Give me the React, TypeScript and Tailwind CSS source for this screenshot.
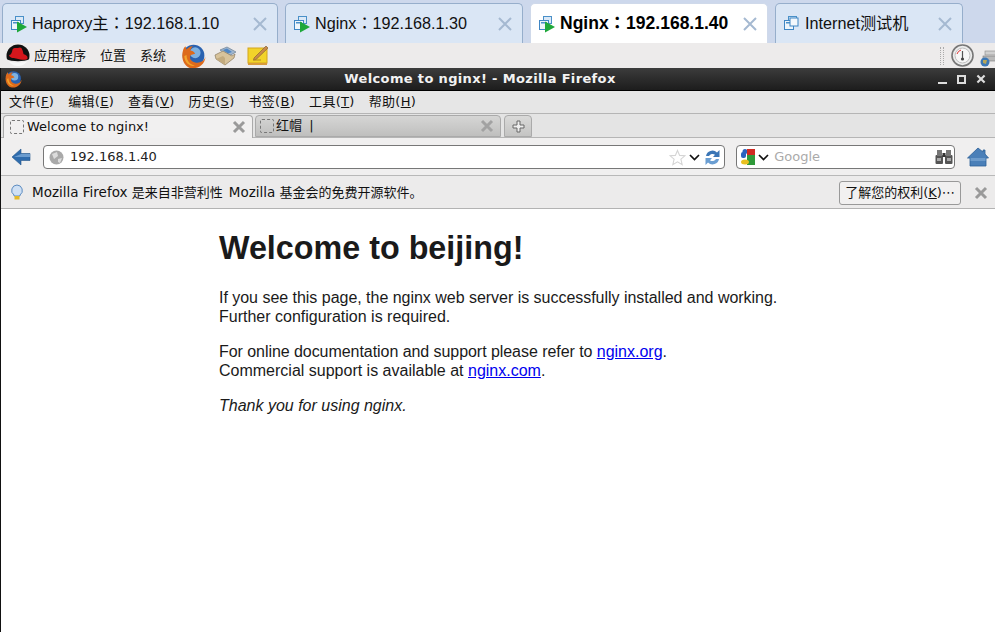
import React from "react";

const UI = "font-['DejaVu_Sans','Noto_Sans_CJK_SC',sans-serif]";

function VmIcon({ play }: { play?: boolean }) {
  return (
    <svg width="18" height="18" viewBox="0 0 18 18" className="shrink-0">
      <rect x="5.5" y="1.5" width="8" height="7" fill="#dbe9f7" stroke="#4a90c8" />
      <rect x="1.5" y="5.5" width="9" height="9" fill="#eef5fb" stroke="#3f86c4" />
      <rect x="3" y="7" width="6" height="1.5" fill="#4a90c8" />
      {play ? <path d="M7 6.5 L17 12 L7 17.5 Z" fill="#1ea83a" /> : <rect x="7" y="3" width="8" height="8" fill="#f4f8fc" stroke="#3f86c4" />}
    </svg>
  );
}

function TabX() {
  return (
    <svg width="16" height="16" viewBox="0 0 16 16" className="shrink-0">
      <path d="M2 2 L14 14 M14 2 L2 14" stroke="#a5b9d1" strokeWidth="2" />
    </svg>
  );
}

function VmTab({ label, play, active, w, mr }: { label: string; play?: boolean; active?: boolean; w: string; mr: string }) {
  return (
    <div className={`${w} ${mr} pr-[9px] h-[40px] rounded-t-[5px] border border-b-0 flex items-center pl-[7px] shrink-0 ${active ? "bg-white border-[#cfd9ea]" : "bg-[#dae6f5] border-[#96aecb]"}`}>
      <VmIcon play={play} />
      <span className={`font-['Liberation_Sans','Noto_Sans_CJK_TC',sans-serif] whitespace-nowrap ml-[4px] flex-1 ${active ? "font-bold text-[17.5px] text-black" : "text-[16.2px] text-[#111]"}`}>{label}</span>
      <TabX />
    </div>
  );
}

function Hat() {
  return (
    <svg width="24" height="24" viewBox="0 0 24 24" className="shrink-0">
      <circle cx="12" cy="12" r="11.5" fill="#111" />
      <path d="M0 15 C6 18 18 18 24 15 V24 H0 Z" fill="#edebeb" />
      <path d="M2.5 17 C7 19 17 19 21.5 17 A11.5 11.5 0 0 1 2.5 17 Z" fill="#f8f8f8" />
      <path d="M3 11 C5 11 6 9 6.5 5.5 C8 3 11 4.5 14 3.5 C16 3.5 17 7 17.5 10 C20 11 22 12 21.5 14.5 C20 17 15 15.5 10 14.5 C7 14 3.5 14 3 11 Z" fill="#d5161c" />
    </svg>
  );
}

function Firefox({ size }: { size: number }) {
  return (
    <svg width={size} height={size} viewBox="0 0 24 24" className="shrink-0">
      <circle cx="12.5" cy="11.5" r="10" fill="#2a62b0" />
      <circle cx="14" cy="9" r="5" fill="#7fb2e0" />
      <path d="M3 6 C1 12 2 20 9 23 C16 25 23 20 23.5 13 C22 17 18 19 14 18 C10 17 8 14 10 11 L14 10 C13 8 11 7 9.5 7 C10 5 11 4 12 3 C9 3 7 5 6 6 L5 3 C4 4 3.5 5 3 6 Z" fill="#dd6a1c" />
      <path d="M4 12 C4 18 9 22 14 21 C10 20 6 17 6 11 Z" fill="#f2a52c" />
    </svg>
  );
}

function Mail() {
  return (
    <svg width="23" height="20" viewBox="0 0 23 20" className="shrink-0">
      <path d="M6 4 L13 1 L22 6 L15 10 Z" fill="#9fb6cf" stroke="#6f7f90" strokeWidth="0.7" />
      <path d="M9 4 L13 2.5 L18 6 L14 7.5 Z" fill="#4f86c4" />
      <path d="M1 9 L9 5 L18 10 L21 8 L20 12 L11 19 L2 13 Z" fill="#d8c39b" stroke="#8a7a5e" strokeWidth="0.7" />
      <path d="M2 13 L9 10 L11 12 L11 19 Z" fill="#c3ab7f" />
    </svg>
  );
}

function Note() {
  return (
    <svg width="23" height="23" viewBox="0 0 23 23" className="shrink-0">
      <rect x="1" y="4" width="19" height="15" fill="#f2d32a" stroke="#d4a51c" />
      <rect x="1" y="19" width="19" height="2" fill="#d89b3c" />
      <path d="M7 14 L19 2 L21 4 L9 15.5 L6.5 16 Z" fill="#c98a4a" stroke="#7a5a30" strokeWidth="0.6" />
      <path d="M6 16 H14" stroke="#b08a22" strokeWidth="1" />
    </svg>
  );
}

function Gauge() {
  return (
    <svg width="23" height="23" viewBox="0 0 23 23" className="shrink-0">
      <circle cx="11.5" cy="11.5" r="10.5" fill="#ededed" stroke="#777" strokeWidth="1.6" />
      <circle cx="11.5" cy="11.5" r="7.5" fill="#f7f7f7" stroke="#bdbdbd" />
      <path d="M6 10 A6 6 0 0 1 10 6" stroke="#d33" strokeWidth="1" fill="none" />
      <path d="M11.5 7 V14" stroke="#555" strokeWidth="1.2" />
      <circle cx="11.5" cy="15" r="1.6" fill="#444" />
    </svg>
  );
}

function Net() {
  return (
    <svg width="15" height="22" viewBox="0 0 15 22" className="shrink-0">
      <rect x="5" y="6" width="12" height="4" fill="#d0d0d0" stroke="#888" strokeWidth="0.6" />
      <rect x="3" y="11" width="14" height="5" fill="#b9b9b9" stroke="#777" strokeWidth="0.6" />
      <circle cx="5" cy="17" r="4.5" fill="#3d78b5" />
      <path d="M3 15 L7 15 L6 19 L3 18 Z" fill="#b8a75a" />
    </svg>
  );
}

function SmallX({ size = 14, color = "#9a9a9a" }: { size?: number; color?: string }) {
  return (
    <svg width={size} height={size} viewBox="0 0 14 14" className="shrink-0">
      <path d="M2 2 L12 12 M12 2 L2 12" stroke={color} strokeWidth="3" />
    </svg>
  );
}

function Favicon() {
  return <span className="w-[14px] h-[14px] shrink-0 rounded-[2px] border border-dashed border-[#777]" />;
}

function Chevron() {
  return (
    <svg width="11" height="7" viewBox="0 0 11 7" className="shrink-0">
      <path d="M1 1 L5.5 5.5 L10 1" stroke="#111" strokeWidth="1.7" fill="none" />
    </svg>
  );
}

function Menu({ label, k }: { label: string; k: string }) {
  return (
    <span className="whitespace-nowrap">
      {label}(<span className="underline">{k}</span>)
    </span>
  );
}

export default function App() {
  return (
    <div className={`w-[995px] h-[632px] overflow-hidden flex flex-col bg-white ${UI}`}>
      {/* VM console tabs */}
      <div className="h-[43px] shrink-0 bg-[#cdd8ec] flex items-end pl-[2px]">
        <VmTab label="Haproxy主：192.168.1.10" play w="w-[276px]" mr="mr-[7px]" />
        <VmTab label="Nginx：192.168.1.30" play w="w-[238px]" mr="mr-[7px]" />
        <VmTab label="Nginx：192.168.1.40" play active w="w-[238px]" mr="mr-[7px]" />
        <VmTab label="Internet测试机" w="w-[188px]" mr="mr-0" />
      </div>

      {/* GNOME panel */}
      <div className="h-[25px] shrink-0 bg-[#edebeb] flex items-center pl-[6px] text-[13px] text-[#111]">
        <Hat />
        <span className="ml-[4px]">应用程序</span>
        <span className="ml-[14px]">位置</span>
        <span className="ml-[14px]">系统</span>
        <span className="ml-[14px]"><Firefox size={26} /></span>
        <span className="ml-[8px]"><Mail /></span>
        <span className="ml-[10px]"><Note /></span>
        <div className="flex-1" />
        <div className="w-[4px] h-[18px] mr-[7px] border-x border-dotted border-[#aaa]" />
        <Gauge />
        <span className="ml-[6px]"><Net /></span>
      </div>

      {/* Firefox window */}
      <div className="flex-1 min-h-0 flex flex-col border-l border-[#111]">
        <div className="h-[23px] shrink-0 bg-gradient-to-b from-[#3c3c3c] to-[#1d1d1d] border-b border-black flex items-center pl-[3px] pr-[9px] text-white">
          <Firefox size={18} />
          <div className="flex-1 text-center font-bold text-[13px] tracking-[0.35px] text-[#f2f2f2]">Welcome to nginx! - Mozilla Firefox</div>
          <div className="flex items-center gap-[10px]">
            <span className="w-[9px] h-[9px] border-b-2 border-[#ddd]" />
            <span className="w-[9px] h-[9px] border-2 border-[#ddd]" />
            <SmallX size={10} color="#ddd" />
          </div>
        </div>

        <div className="h-[22px] shrink-0 bg-[#e6e6e6] flex items-center pl-[8px] gap-[14px] text-[13px] tracking-[0.3px] text-[#111]">
          <Menu label="文件" k="F" />
          <Menu label="编辑" k="E" />
          <Menu label="查看" k="V" />
          <Menu label="历史" k="S" />
          <Menu label="书签" k="B" />
          <Menu label="工具" k="T" />
          <Menu label="帮助" k="H" />
        </div>

        {/* Browser tabs */}
        <div className="h-[25px] shrink-0 bg-[#e4e4e4] border-t border-b border-[#b5b5b5] flex items-end pl-[2px] text-[13px] text-[#111]">
          <div className="w-[250px] h-[23px] bg-[#f1f0f0] rounded-t-[4px] border border-b-0 border-[#aaa] flex items-center pb-[1px] pl-[6px] pr-[6px] gap-[3px] relative top-px">
            <Favicon />
            <span className="flex-1 whitespace-nowrap">Welcome to nginx!</span>
            <SmallX />
          </div>
          <div className="w-[246px] h-[22px] ml-[2px] bg-gradient-to-b from-[#d6d6d5] to-[#bfbfbe] rounded-t-[4px] border border-[#aaa] flex items-center pl-[4px] pr-[6px] gap-[2px]">
            <Favicon />
            <span className="flex-1 whitespace-nowrap">红帽 <span className="ml-[3px]">|</span></span>
            <SmallX color="#a2a2a2" />
          </div>
          <div className="w-[28px] h-[22px] ml-[3px] bg-gradient-to-b from-[#dadad9] to-[#c4c4c3] rounded-t-[4px] border border-[#aaa] flex items-center justify-center">
            <svg width="13" height="13" viewBox="0 0 13 13">
              <path d="M5 1 H8 V5 H12 V8 H8 V12 H5 V8 H1 V5 H5 Z" fill="#eee" stroke="#666" />
            </svg>
          </div>
        </div>

        {/* Navigation bar */}
        <div className="h-[38px] shrink-0 bg-[#f0efef] border-b border-[#b8b8b8] flex items-center pl-[10px] pr-[6px] pt-[1px]">
          <svg width="20" height="20" viewBox="0 0 20 20" className="shrink-0">
            <path d="M1 10 L10 2 V6.5 H19 V13.5 H10 V18 Z" fill="#2f6cad" stroke="#24558c" strokeWidth="0.6" />
            <path d="M10 7 H19 V10 H3 Z" fill="#6b9ccf" />
          </svg>
          <div className="w-[683px] h-[24px] ml-[12px] bg-white rounded-[4px] border border-[#777] flex items-center pl-[5px] pr-[3px]">
            <svg width="15" height="15" viewBox="0 0 15 15" className="shrink-0">
              <circle cx="7.5" cy="7.5" r="7" fill="#a9a9a9" />
              <path d="M3 4 L8 2 L9 6 L5 9 Z M9 9 L13 8 L11 13 L9 12 Z" fill="#dcdcdc" />
            </svg>
            <span className="ml-[6px] flex-1 text-[13px] text-[#222]">192.168.1.40</span>
            <svg width="17" height="17" viewBox="0 0 24 24" className="shrink-0">
              <path d="M12 2 L15 9 L22.5 9.6 L16.8 14.4 L18.6 22 L12 18 L5.4 22 L7.2 14.4 L1.5 9.6 L9 9 Z" fill="#fff" stroke="#d4d4d4" strokeWidth="1.5" />
            </svg>
            <span className="ml-[3px]"><Chevron /></span>
            <svg width="17" height="17" viewBox="0 0 17 17" className="shrink-0 ml-[4px]">
              <path d="M2 7 A6.5 6.5 0 0 1 13 3.5 L15.5 1 V8 H9 L11 5.8 A4 4 0 0 0 5 7 Z" fill="#3b76b6" />
              <path d="M15 10 A6.5 6.5 0 0 1 4 13.5 L1.5 16 V9 H8 L6 11.2 A4 4 0 0 0 12 10 Z" fill="#6a9ed2" />
            </svg>
          </div>
          <div className="w-[219px] h-[24px] ml-[11px] bg-white rounded-[4px] border border-[#777] flex items-center pl-[3px] pr-[1px]">
            <svg width="16" height="18" viewBox="0 0 16 18" className="shrink-0">
              <rect x="1" y="4" width="5" height="6" rx="2" fill="#2a62c0" />
              <circle cx="5" cy="3.5" r="2.5" fill="#2a62c0" />
              <rect x="7" y="1" width="8" height="6" fill="#cf2a22" />
              <rect x="7" y="7" width="8" height="10" fill="#2f9a3a" />
              <ellipse cx="5" cy="14" rx="4" ry="2.5" fill="#e8c020" />
            </svg>
            <span className="ml-[2px]"><Chevron /></span>
            <span className="ml-[5px] flex-1 text-[13px] text-[#aaa]">Google</span>
            <svg width="18" height="16" viewBox="0 0 18 16" className="shrink-0">
              <rect x="0.5" y="6" width="7.5" height="9" rx="1" fill="#555" />
              <rect x="10" y="6" width="7.5" height="9" rx="1" fill="#555" />
              <rect x="2" y="1" width="5" height="6" fill="#777" />
              <rect x="11" y="1" width="5" height="6" fill="#777" />
              <rect x="7.5" y="4" width="3" height="4" fill="#333" />
              <rect x="2" y="9" width="4" height="3" fill="#aaa" />
              <rect x="12" y="9" width="4" height="3" fill="#aaa" />
            </svg>
          </div>
          <svg width="22" height="20" viewBox="0 0 22 20" className="shrink-0 ml-[12px]">
            <path d="M11 1 L16 5 V3 H18 V7 L21.5 11 H19 V19 H3 V11 H0.5 Z" fill="#4a7fb8" stroke="#2c5f98" strokeWidth="0.8" />
            <rect x="3.5" y="11" width="15" height="3" fill="#6d9bcb" />
          </svg>
        </div>

        {/* Notification bar */}
        <div className="h-[33px] shrink-0 bg-[#ecebeb] border-b border-[#b3b3b3] flex items-center pl-[9px] pr-[7px] pt-[1px] text-[13px] text-[#111]">
          <svg width="14" height="17" viewBox="0 0 14 17" className="shrink-0">
            <path d="M7 1 A5.5 5.5 0 0 1 10 11 V12 H4 V11 A5.5 5.5 0 0 1 7 1 Z" fill="#cfe0f4" stroke="#5d8cc0" />
            <rect x="4.5" y="12" width="5" height="3.5" fill="#e4b92a" />
          </svg>
          <span className="ml-[8px] flex-1 whitespace-pre"><span className="text-[13.5px]">Mozilla Firefox</span> 是来自非营利性 <span className="ml-[2px] text-[13.5px]">Mozilla</span> 基金会的免费开源软件。</span>
          <div className="w-[122px] h-[24px] bg-[#f1f0f0] border border-[#999] rounded-[3px] flex items-center justify-center whitespace-nowrap">
            了解您的权利(<span className="underline">K</span>)⋯
          </div>
          <span className="ml-[13px]"><SmallX /></span>
        </div>

        {/* Page */}
        <div className="flex-1 min-h-0 bg-white text-[#1a1a1a] font-['Liberation_Sans',sans-serif] text-[16px] leading-[19px] pl-[218px] pt-[21px]">
          <div className="w-[600px]">
            <h1 className="text-[32.3px] leading-[37px] font-bold">Welcome to beijing!</h1>
            <p className="mt-[21px]"><span className="tracking-[-0.025px]">If you see this page, the nginx web server is successfully installed and working.</span><br />Further configuration is required.</p>
            <p className="mt-[16px]"><span className="tracking-[-0.055px]">For online documentation and support please refer to </span><a className="text-[#0000ee] underline" href="#">nginx.org</a>.<br />Commercial support is available at <a className="text-[#0000ee] underline" href="#">nginx.com</a>.</p>
            <p className="mt-[16px] italic">Thank you for using nginx.</p>
          </div>
        </div>
      </div>
    </div>
  );
}
